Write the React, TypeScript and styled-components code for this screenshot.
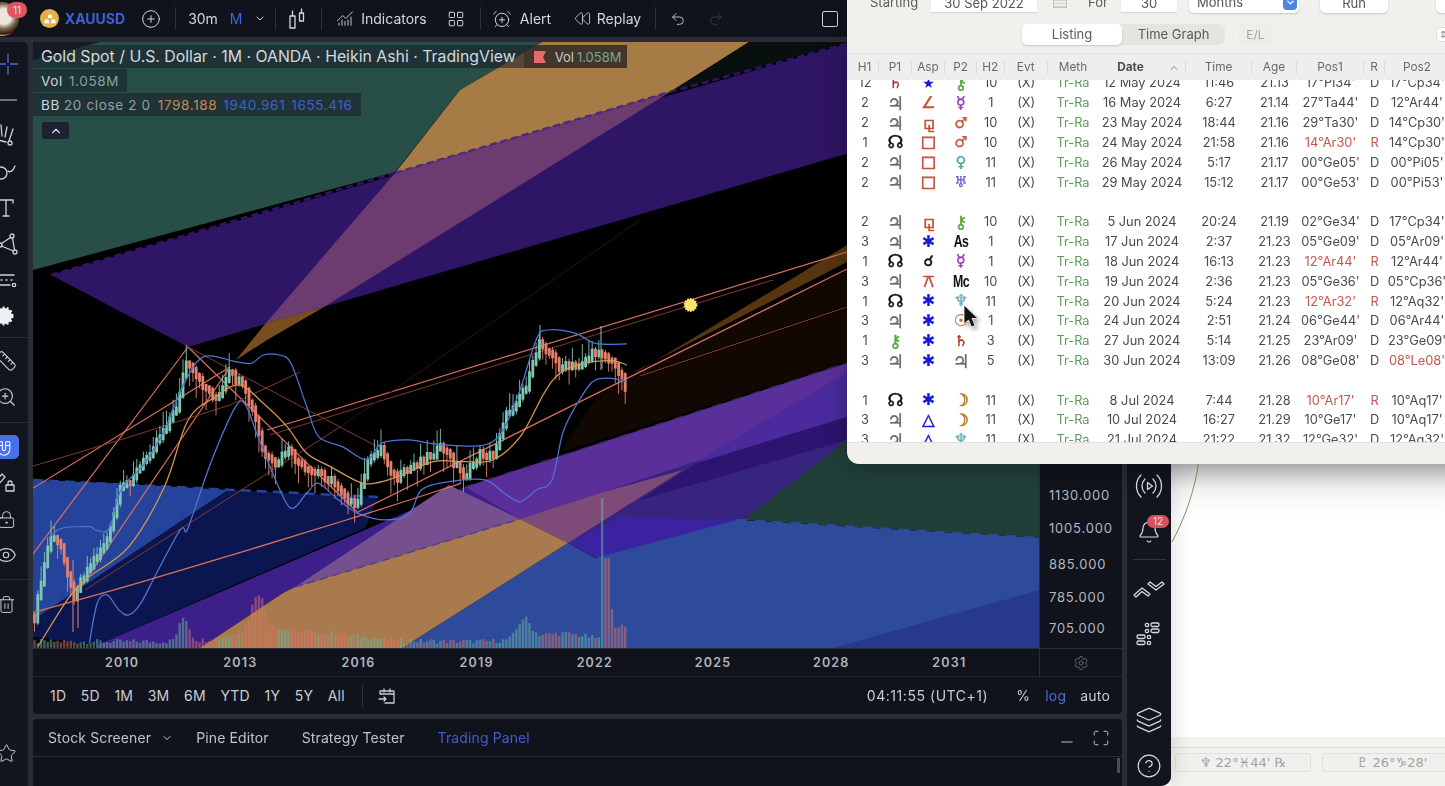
import React from "react";
import styled, { createGlobalStyle } from "styled-components";
import {
  AlarmClockPlus, Bell, ChartNoAxesCombined, ChevronDown, ChevronUp, CircleHelp, CirclePlus, Eye, Layers,
  LayoutGrid, LockKeyhole, Magnet, Maximize, Minus, Redo2, Rewind, Ruler, Settings, Square, Star, Trash2,
  Undo2, ZoomIn,
} from "lucide-react";

const Global = createGlobalStyle`
  html, body { margin: 0; padding: 0; width: 100%; height: 100%; overflow: hidden; background: #fff; }
  #root { width: 1445px; height: 786px; overflow: hidden; }
  * { box-sizing: border-box; }
`;

const Screen = styled.div`
  position: relative;
  display: flex;
  width: 1445px;
  height: 786px;
  overflow: hidden;
  font-family: Inter, "Liberation Sans", sans-serif;
  filter: blur(0.35px);
`;

/* ---------- trading window ---------- */
const TradingWindow = styled.div`
  flex: 0 0 1171px;
  display: flex;
  flex-direction: column;
  height: 786px;
  background: #292c36;
  border-bottom-right-radius: 10px;
  box-shadow: 0 0 22px rgba(0, 0, 0, 0.16);
  z-index: 1;
  color: #d1d4dc;
`;
const TopBar = styled.header`
  flex: 0 0 37px;
  display: flex;
  align-items: center;
  background: #11131c;
  overflow: hidden;
  font-size: 14px;
  color: #d5d7de;
`;
const Slot = styled.div<{ $ml?: number; $w?: number; $color?: string; $bold?: boolean }>`
  flex: 0 0 ${(p) => (p.$w ? `${p.$w}px` : "auto")};
  margin-left: ${(p) => p.$ml ?? 0}px;
  display: flex;
  align-items: center;
  justify-content: center;
  white-space: nowrap;
  overflow: hidden;
  color: ${(p) => p.$color ?? "inherit"};
  font-weight: ${(p) => (p.$bold ? 700 : 400)};
`;
const BarDivider = styled.div<{ $ml: number }>`
  flex: 0 0 1px;
  height: 23px;
  margin-left: ${(p) => p.$ml}px;
  background: #2e313c;
`;
const AvatarWrap = styled.div`
  flex: 0 0 34px;
  height: 34px;
  margin-left: -15px;
  position: relative;
  border-radius: 50%;
  background: radial-gradient(circle at 55% 42%, #ece7da 0 28%, #7c6a50 46%, #2a1c0e 66%, #d0913a 70%, #c98a34 78%, #1a1208 84%);
`;
const NoticeBadge = styled.span`
  position: absolute;
  right: -8px;
  top: 0;
  width: 20px;
  height: 16px;
  border-radius: 9px;
  background: #e25560;
  color: #f7e8e8;
  font-size: 10px;
  line-height: 16px;
  text-align: center;
`;
const CoinLogo = styled.div`
  flex: 0 0 19px;
  height: 19px;
  margin-left: 21px;
  border-radius: 50%;
  background: #e3b04b;
  display: flex;
  align-items: center;
  justify-content: center;
`;

const MainRow = styled.div`
  flex: 1;
  display: flex;
  min-height: 0;
  padding-top: 5px;
`;
const LeftRail = styled.nav`
  flex: 0 0 28px;
  margin-right: 5px;
  display: flex;
  flex-direction: column;
  padding-top: 4px;
  padding-bottom: 15px;
  background: #12141e;
  border-top-right-radius: 5px;
  overflow: hidden;
  color: #cfd2da;
`;
const RailCell = styled.div<{ $blue?: boolean }>`
  flex: 0 0 36px;
  margin-left: -8px;
  width: 28px;
  display: flex;
  align-items: center;
  justify-content: center;
  color: ${(p) => (p.$blue ? "#4c6fe0" : "inherit")};
  position: relative;
`;
const MagnetBg = styled.div`
  flex: 0 0 30px;
  height: 24px;
  margin-left: -4px;
  background: #4b6fe8;
  border-radius: 5px;
  display: flex;
  align-items: center;
  justify-content: center;
  color: #fff;
`;
const TurnedMagnet = styled(Magnet)`
  transform: rotate(135deg);
`;
const RailSep = styled.div<{ $mt: number; $mb: number }>`
  flex: 0 0 1px;
  margin-top: ${(p) => p.$mt}px;
  margin-bottom: ${(p) => p.$mb}px;
  background: #2b2e39;
`;
const RailBottom = styled(RailCell)`
  margin-top: auto;
`;

const ChartColumn = styled.main`
  flex: 0 0 1089px;
  display: flex;
  flex-direction: column;
  min-width: 0;
`;
const ChartRow = styled.div`
  flex: 0 0 606px;
  display: flex;
  position: relative;
  background: #11131c;
`;
const ChartPane = styled.div`
  flex: 0 0 1006px;
  position: relative;
  height: 606px;
  overflow: hidden;
  background: #000;
`;
const PriceAxis = styled.div`
  flex: 1;
  display: flex;
  flex-direction: column;
  justify-content: flex-end;
  align-items: flex-start;
  padding: 0 0 13px 9px;
  border-left: 1px solid #2a2d38;
  font-size: 13px;
  letter-spacing: 0.8px;
  color: #b4b7c0;
`;
const PriceLabel = styled.div<{ $mb: number }>`
  line-height: 14px;
  margin-bottom: ${(p) => p.$mb}px;
`;
const TimeRow = styled.div`
  flex: 0 0 28px;
  display: flex;
  background: #11131c;
  border-top: 1px solid #2a2d38;
`;
const TimeAxis = styled.div`
  flex: 0 0 1006px;
  display: flex;
  align-items: center;
  padding-left: 30px;
`;
const TimeLabel = styled.div`
  flex: 0 0 118.2px;
  text-align: center;
  font-size: 12.5px;
  font-weight: 600;
  letter-spacing: 1.2px;
  color: #b2b5be;
`;
const GearCell = styled.div`
  flex: 1;
  display: flex;
  align-items: center;
  justify-content: center;
  border-left: 1px solid #2a2d38;
  color: #6f7380;
`;
const RangeBar = styled.div`
  flex: 0 0 38px;
  display: flex;
  align-items: center;
  gap: 14.6px;
  padding: 0 12px 0 17px;
  background: #11131c;
  border-top: 1px solid #24262f;
  border-bottom-left-radius: 4px;
  border-bottom-right-radius: 4px;
  font-size: 14px;
  letter-spacing: 0.2px;
  color: #c9ccd4;
`;
const RangeDivider = styled.div`
  width: 1px;
  height: 22px;
  margin-left: 3px;
  background: #2e313c;
`;
const RangeRight = styled.div`
  margin-left: auto;
  display: flex;
  align-items: center;
`;
const RangeText = styled.span<{ $ml?: number; $blue?: boolean; $wide?: boolean }>`
  margin-left: ${(p) => p.$ml ?? 0}px;
  letter-spacing: ${(p) => (p.$wide ? "0.55px" : "0.2px")};
  color: ${(p) => (p.$blue ? "#4b6bd6" : "#c9ccd4")};
`;
const TabBar = styled.div`
  flex: 0 0 37px;
  margin-top: 5px;
  display: flex;
  align-items: center;
  padding: 0 12px 0 15px;
  background: #11131c;
  border-top-left-radius: 4px;
  border-top-right-radius: 4px;
  font-size: 14px;
  letter-spacing: 0.12px;
  color: #bfc2ca;
`;
const Tab = styled.span<{ $ml?: number; $active?: boolean }>`
  margin-left: ${(p) => p.$ml ?? 0}px;
  display: flex;
  color: ${(p) => (p.$active ? "#3f5fc8" : "inherit")};
`;
const TabTools = styled.div`
  margin-left: auto;
  display: flex;
  align-items: center;
  gap: 16px;
`;
const PanelFoot = styled.div`
  flex: 1;
  margin-top: 1px;
  background: #11131c;
  position: relative;
`;
const ScrollNub = styled.div`
  position: absolute;
  right: 2px;
  top: 1px;
  width: 3px;
  height: 15px;
  background: #4a4d58;
`;
const RightRail = styled.aside`
  flex: 0 0 44px;
  margin-left: 5px;
  display: flex;
  flex-direction: column;
  align-items: center;
  padding-top: 424px;
  background: #12141e;
  border-bottom-right-radius: 10px;
  color: #d6d9e0;
`;
const RailButton = styled.div<{ $mt?: number; $auto?: boolean }>`
  flex: 0 0 40px;
  width: 40px;
  margin-top: ${(p) => (p.$auto ? "auto" : `${p.$mt ?? 0}px`)};
  display: flex;
  align-items: center;
  justify-content: center;
  position: relative;
`;
const BellBadge = styled.span`
  position: absolute;
  top: 3px;
  right: 0;
  width: 22px;
  height: 13px;
  border-radius: 7px;
  background: #d9525b;
  color: #f4e9e9;
  font-size: 10px;
  line-height: 13px;
  text-align: center;
`;
const RightSep = styled.div`
  flex: 0 0 1px;
  width: 33px;
  margin-top: 7px;
  background: #33363f;
`;

/* ---------- chart legend (over the chart) ---------- */
const Legend = styled.div`
  position: absolute;
  left: 0;
  top: 3px;
  display: flex;
  flex-direction: column;
  align-items: flex-start;
  gap: 1px;
`;
const LegendLine = styled.div`
  display: flex;
  align-items: center;
  height: 23px;
  padding: 0 8px;
  background: rgba(24, 30, 42, 0.55);
  white-space: nowrap;
`;
const TitleText = styled.span`
  font-size: 15.84px;
  color: #d6d8de;
`;
const FlagChip = styled.div`
  display: flex;
  align-items: center;
  align-self: stretch;
  gap: 8px;
  margin-left: 8px;
  padding-left: 9px;
  padding-right: 6px;
  margin-right: -8px;
  background: rgba(50, 40, 36, 0.55);
  font-size: 13px;
`;
const LegendRows = styled.div`
  font-size: 13.5px;
  letter-spacing: 0.65px;
`;
const Leg = styled.span<{ $c: string; $ml?: number }>`
  color: ${(p) => p.$c};
  margin-left: ${(p) => p.$ml ?? 0}px;
`;
const CollapseBtn = styled.div`
  width: 27px;
  height: 17px;
  margin: 5px 0 0 9px;
  background: #1e2230;
  border-radius: 2px;
  display: flex;
  align-items: center;
  justify-content: center;
  color: #d5d7de;
`;

/* ---------- window behind, right ---------- */
const BackWindow = styled.section`
  flex: 1;
  display: flex;
  flex-direction: column;
  justify-content: flex-end;
  position: relative;
  background: linear-gradient(to bottom, #cfcfcf 0, #cfcfcf 464px, #f3f3f3 490px, #fff 515px);
`;
const ArcDrawing = styled.svg`
  position: absolute;
  left: 0;
  top: 460px;
`;
const BackFooter = styled.div`
  flex: 0 0 49px;
  display: flex;
  flex-direction: column;
  background: #f3f2ef;
`;
const BackRule = styled.div`
  flex: 0 0 11px;
  border-bottom: 1px solid #dcdbd8;
`;
const BackButtons = styled.div`
  display: flex;
  gap: 11px;
  padding: 5px 0 0 4px;
`;
const BackButton = styled.div<{ $w: number }>`
  flex: 0 0 ${(p) => p.$w}px;
  height: 19px;
  display: flex;
  align-items: center;
  justify-content: center;
  background: #f1f0ee;
  border: 1px solid #e0dfdc;
  border-radius: 3px;
  font-family: "DejaVu Sans", sans-serif;
  font-size: 13px;
  color: #a3a3a3;
  white-space: nowrap;
`;

/* ---------- astrology window ---------- */
const AstroWindow = styled.section`
  position: absolute;
  left: 847px;
  top: -9px;
  width: 620px;
  height: 473px;
  display: flex;
  flex-direction: column;
  background: #f2f0ed;
  border-bottom-left-radius: 12px;
  box-shadow: 0 4px 26px rgba(0, 0, 0, 0.28);
  z-index: 2;
  font-size: 13px;
  color: #444;
  overflow: hidden;
`;
const FormRow = styled.div`
  flex: 0 0 22px;
  display: flex;
  align-items: center;
  padding-left: 23px;
`;
const FormLabel = styled.span<{ $ml?: number; $w: number }>`
  flex: 0 0 ${(p) => p.$w}px;
  margin-left: ${(p) => p.$ml ?? 0}px;
  color: #5c5c5c;
`;
const FormField = styled.div<{ $w: number }>`
  flex: 0 0 ${(p) => p.$w}px;
  height: 20px;
  background: #fff;
  box-shadow: 0 1px 1px rgba(0, 0, 0, 0.1);
  text-align: center;
  line-height: 22px;
  color: #555;
`;
const FormSelect = styled.div`
  flex: 0 0 110px;
  margin-left: 12px;
  height: 21px;
  display: flex;
  align-items: center;
  justify-content: space-between;
  padding: 0 2px 0 8px;
  background: #fff;
  border-radius: 5px;
  box-shadow: 0 1px 2px rgba(0, 0, 0, 0.18);
  color: #555;
`;
const Stepper = styled.div`
  width: 14px;
  height: 16px;
  border-radius: 4px;
  background: #4d84e6;
  color: #fff;
  display: flex;
  align-items: center;
  justify-content: center;
`;
const FormButton = styled.div<{ $ml: number; $w: number }>`
  flex: 0 0 ${(p) => p.$w}px;
  margin-left: ${(p) => p.$ml}px;
  height: 21px;
  background: #fff;
  border-radius: 5px;
  box-shadow: 0 1px 2px rgba(0, 0, 0, 0.18);
  text-align: center;
  line-height: 22px;
  color: #555;
`;
const CalGlyph = styled.div`
  flex: 0 0 14px;
  margin-left: 16px;
  margin-right: 21px;
  height: 11px;
  border: 1px solid #c4c3c0;
  background: repeating-linear-gradient(0deg, #d5d4d1 0 1px, #efeeeb 1px 3px);
`;
const TabsRow = styled.div`
  flex: 0 0 21px;
  margin-top: 11px;
  display: flex;
  align-items: center;
  padding-left: 175px;
`;
const Segments = styled.div`
  flex: 0 0 203px;
  display: flex;
  height: 21px;
  background: #e6e4e1;
  border-radius: 6px;
`;
const Segment = styled.div<{ $on?: boolean }>`
  flex: ${(p) => (p.$on ? "0 0 100px" : "1")};
  background: ${(p) => (p.$on ? "#fff" : "transparent")};
  border-radius: 5px;
  box-shadow: ${(p) => (p.$on ? "0 1px 2px rgba(0,0,0,.18)" : "none")};
  text-align: center;
  line-height: 21px;
  color: #5a5a5a;
`;
const GhostBtn = styled.div`
  flex: 0 0 35px;
  margin-left: 13px;
  height: 21px;
  background: #efedea;
  border-radius: 4px;
  text-align: center;
  line-height: 21px;
  font-size: 12px;
  color: #a7a6a3;
`;
const SideStub = styled.div`
  flex: 0 0 30px;
  margin-left: 163px;
  height: 15px;
  background: #fff;
  border-radius: 4px;
  border: 1px solid #dedcd9;
  font-size: 10px;
  line-height: 13px;
  padding-left: 2px;
  color: #888;
`;

const COLS = "32px 33px 33px 32px 27.5px 43.5px 50px 88px 66px 45px 67px 21px 64px";
const TableHead = styled.div`
  flex: 0 0 27px;
  margin-top: 8px;
  display: grid;
  grid-template-columns: ${COLS};
  align-items: center;
  background: #eeeeee;
  border-top: 1px solid #e2e1df;
  font-size: 11.8px;
  color: #6a6a6a;
  & > :first-child { padding-left: 4px; }
`;
const HeadCell = styled.div<{ $sep?: boolean; $strong?: boolean }>`
  position: relative;
  height: 13px;
  display: flex;
  align-items: center;
  justify-content: center;
  padding-right: ${(p) => (p.$strong ? 22 : 0)}px;
  border-right: ${(p) => (p.$sep ? "1px solid #dcdcdc" : "none")};
  font-weight: ${(p) => (p.$strong ? 700 : 400)};
  color: ${(p) => (p.$strong ? "#4c4c4c" : "inherit")};
`;
const SortCaret = styled.span`
  position: absolute;
  right: 5px;
  top: 1px;
  color: #888;
  display: flex;
`;
const TableBody = styled.div`
  flex: 0 0 363px;
  background: #fff;
  overflow: hidden;
  border-bottom: 1px solid #e2e0dd;
`;
const Rows = styled.div`
  margin-top: -7px;
  display: flex;
  flex-direction: column;
`;
const Row = styled.div`
  flex: 0 0 19.84px;
  height: 19.84px;
  display: grid;
  grid-template-columns: ${COLS};
  align-items: center;
  text-align: center;
  white-space: nowrap;
  font-size: 12.8px;
  color: #4a4a4a;
  & > :first-child { padding-left: 4px; }
`;
const Meth = styled.span`
  color: #609c5c;
`;
const Hot = styled.span<{ $hot?: boolean }>`
  color: ${(p) => (p.$hot ? "#c7564d" : "#4a4a4a")};
`;
const Glyph = styled.span<{ $c: string; $s: number; $w: number }>`
  font-family: "DejaVu Sans", sans-serif;
  font-size: ${(p) => p.$s}px;
  line-height: 16px;
  height: 16px;
  color: ${(p) => p.$c};
  -webkit-text-stroke: ${(p) => p.$w}px ${(p) => p.$c};
`;
const AngleTag = styled.span`
  display: inline-block;
  font-family: "Liberation Sans", sans-serif;
  font-size: 13px;
  font-weight: 700;
  letter-spacing: -0.6px;
  color: #111;
  transform: scale(0.95, 1.3);
`;
const CursorArt = styled.svg`
  position: absolute;
  left: 962px;
  top: 304px;
  z-index: 3;
  filter: drop-shadow(2px 3px 2px rgba(0, 0, 0, 0.35));
`;

/* ---------- chart data ---------- */
const WAY: [number, number][] = [
  [34, 620], [50, 537], [62, 547], [73, 597], [81, 580], [109, 537], [119, 493], [141, 467], [157, 440], [176, 410],
  [186, 363], [198, 380], [218, 400], [230, 373], [243, 387], [255, 417], [263, 453], [275, 467], [287, 450],
  [307, 473], [321, 473], [342, 490], [356, 510], [366, 467], [380, 447], [396, 480], [421, 460], [443, 448],
  [465, 477], [481, 453], [493, 457], [504, 420], [528, 383], [540, 340], [560, 367], [576, 367], [599, 350],
  [619, 370], [627, 390],
];
const yAt = (x: number) => {
  for (let i = 1; i < WAY.length; i++) {
    if (x <= WAY[i][0]) {
      const [x0, y0] = WAY[i - 1];
      const [x1, y1] = WAY[i];
      return y0 + ((y1 - y0) * (x - x0)) / (x1 - x0);
    }
  }
  return WAY[WAY.length - 1][1];
};
const rnd = (i: number) => {
  const s = Math.sin(i * 12.9898) * 43758.5453;
  return s - Math.floor(s);
};
type Candle = { x: number; top: number; bot: number; hi: number; lo: number; up: boolean };
const CANDLES: Candle[] = [];
for (let i = 0, x = 34.5; x <= 628; x += 3.3, i++) {
  const a = yAt(Math.max(34, x - 3.3)) + (rnd(i) - 0.5) * 7;
  const b = yAt(x) + (rnd(i + 1) - 0.5) * 7;
  const up = b < a;
  const top = Math.min(a, b) - 3;
  const bot = Math.max(a, b) + 3;
  CANDLES.push({
    x,
    top,
    bot,
    up,
    hi: top - (up ? rnd(i + 50) * 15 + 2 : rnd(i + 50) * 3),
    lo: bot + (up ? rnd(i + 70) * 3 : rnd(i + 70) * 17 + 2),
  });
}
const bump = (x: number, c: number, w: number, h: number) => h * Math.exp(-((x - c) * (x - c)) / (w * w));
const VOLS = CANDLES.map((c, i) => {
  const x = c.x;
  const h =
    4 + rnd(i + 11) * 5 +
    bump(x, 258, 9, 36) + bump(x, 184, 7, 24) + bump(x, 524, 9, 20) + bump(x, 560, 40, 8) +
    bump(x, 610, 4, 36) + bump(x, 622, 6, 18) + bump(x, 260, 40, 10) + bump(x, 320, 60, 8);
  const peak = x > 599 && x < 605;
  return { x, h: peak ? 150 : x >= 605 && x < 609 ? 90 : h, up: peak ? true : c.up };
});

const UPPER = "50,650 80,625 150,620 165,630 200,625 230,510 290,430 340,330 390,190 440,110 520,125 560,130 590,105 630,105 660,130 700,260 730,350 790,380 850,420 880,380 900,365 960,360 1050,375 1170,365 1230,240 1280,60 1310,30 1380,40 1430,70 1510,72";
const LOWER = "150,970 170,850 195,825 225,870 250,885 280,850 320,760 380,630 395,635 410,590 460,420 520,260 545,255 570,330 600,420 640,530 665,565 700,520 730,490 780,540 830,580 900,600 960,580 990,510 1060,485 1150,480 1200,520 1240,545 1280,510 1320,480 1350,330 1400,220 1430,180 1470,175 1510,185";
const BASIS = "20,980 100,830 150,770 250,680 340,500 400,300 470,230 530,195 590,250 650,320 700,400 760,440 830,485 870,490 930,470 1020,425 1100,425 1170,420 1240,350 1300,220 1340,160 1400,130 1470,122 1510,135";
const CURVE = "0,880 300,780 800,600 1090,490";

const smooth = (s: string) => {
  const p = s.split(" ").map((t) => t.split(",").map(Number));
  let d = `M${p[0][0]} ${p[0][1]}`;
  for (let i = 0; i < p.length - 1; i++) {
    const a = p[Math.max(0, i - 1)];
    const b = p[i];
    const c = p[i + 1];
    const e = p[Math.min(p.length - 1, i + 2)];
    d += `C${b[0] + (c[0] - a[0]) / 6} ${b[1] + (c[1] - a[1]) / 6} ${c[0] - (e[0] - b[0]) / 6} ${c[1] - (e[1] - b[1]) / 6} ${c[0]} ${c[1]}`;
  }
  return d;
};

const POLYS: [string, string][] = [
  ["33,42 100,42 33,60", "#151b22"],
  ["100,42 542,42 460,90 395,172 33,270 33,60", "#284f47"],
  ["395,173 460,90 542,42 749,42 670,92", "#a67b45"],
  ["749,42 849,42 670,92", "#07100f"],
  ["51,275 849,43 849,153 279,320 188,347", "#2f1565"],
  ["395,173 670,92 324,307 266,323", "#6c3b6f"],
  ["324,307 266,323 236,360 267,340", "#7a4f1f"],
  ["600,392 847,269 847,363 560,452", "#120803"],
  ["640,370 790,280 847,245 847,262 632,373", "#573510"],
  ["33,480 109,483 228,490 33,620", "#25439a"],
  ["228,490 378,497 365,528 97,645 33,637 33,620", "#0b1650"],
  ["33,637 97,645 33,648", "#0a0a12"],
  ["520,519 847,373 847,470 743,520 595,558 568,543", "#37247e"],
  ["97,645 465,487 650,427 650,480 520,519 295,587 283,593 200,648 97,648", "#3c1f88"],
  ["465,487 650,427 847,363 847,373 700,460 600,493 520,519", "#5b2f9a"],
  ["700,460 847,373 847,417 697,463", "#4a2a9c"],
  ["449,485 520,519 295,587", "#764f8e"],
  ["640,500 697,463 847,417 847,440", "#2d1470"],
  ["568,543 620,517 743,520 600,558", "#3b22a0"],
  ["743,520 847,440 1039,440 1039,538", "#203f38"],
  ["402,648 568,543 595,558 737,520 1039,538 1039,648", "#2e4b9b"],
  ["520,519 600,493 683,470 568,543", "#7e4a78"],
  ["520,519 568,543 402,648 200,648 283,593 295,587", "#a87a4d"],
  ["833,648 1039,590 1039,648", "#27388f"],
];

const Chart = () => (
  <svg width={1006} height={606} viewBox="33 42 1006 606" style={{ display: "block" }}>
    <rect x={33} y={42} width={1006} height={606} fill="#000" />
    {POLYS.map(([pts, c], i) => (
      <polygon key={i} points={pts} fill={c} />
    ))}
    <line x1={51} y1={275} x2={395} y2={173} stroke="#2f1565" strokeWidth={2.5} strokeDasharray="7 4" />
    <line x1={395} y1={173} x2={670} y2={92} stroke="#4c2a85" strokeWidth={2.5} strokeDasharray="7 4" />
    <line x1={670} y1={92} x2={849} y2={43} stroke="#2f1565" strokeWidth={2.5} strokeDasharray="7 4" />
    <line x1={737} y1={520} x2={1039} y2={538} stroke="#2e4b9b" strokeWidth={2.5} strokeDasharray="10 8" />
    <line x1={33} y1={480} x2={378} y2={497} stroke="#25439a" strokeWidth={2.5} strokeDasharray="10 6" />
    <line x1={295} y1={587} x2={520} y2={519} stroke="#5a3b95" strokeWidth={1.5} strokeDasharray="8 5" />
    <line x1={465} y1={487} x2={847} y2={363} stroke="#3b2a5c" strokeWidth={1.5} strokeDasharray="10 10" />
    <g stroke="#dd705c" fill="none" strokeWidth={1.2}>
      <line x1={30} y1={558} x2={188} y2={347} />
      <line x1={188} y1={347} x2={358} y2={513} />
      <line x1={30} y1={490} x2={230} y2={367} />
      <line x1={358} y1={512} x2={847} y2={269} />
      <line x1={267} y1={430} x2={847} y2={252} />
      <line x1={81} y1={587} x2={230} y2={367} />
    </g>
    <g stroke="#7e3a30" fill="none" strokeWidth={1}>
      <line x1={188} y1={347} x2={378} y2={447} />
      <polyline points="30,467 120,440 230,405 300,372" />
      <line x1={270} y1={435} x2={773} y2={280} />
      <line x1={640} y1={376} x2={847} y2={307} />
      <line x1={85} y1={590} x2={340} y2={427} />
      <line x1={340} y1={427} x2={640} y2={220} stroke="#2a1410" />
    </g>
    {VOLS.map((v, i) => (
      <rect key={i} x={v.x - 1.2} y={648 - v.h} width={2.4} height={v.h} fill={v.up ? "#69b8a2" : "#dd7565"} opacity={0.5} />
    ))}
    {CANDLES.map((c, i) => (
      <g key={i} fill={c.up ? "#7fc7b0" : "#e6806d"} stroke={c.up ? "#7fc7b0" : "#e6806d"}>
        <line x1={c.x} x2={c.x} y1={c.hi} y2={c.lo} strokeWidth={0.9} />
        <rect x={c.x - 1.4} y={c.top} width={2.8} height={c.bot - c.top} stroke="none" />
      </g>
    ))}
    <line x1={73} x2={73} y1={560} y2={632} stroke="#e6806d" strokeWidth={1} />
    <line x1={78} x2={78} y1={585} y2={628} stroke="#e6806d" strokeWidth={1} />
    <line x1={540} x2={540} y1={325} y2={360} stroke="#7fc7b0" strokeWidth={1} />
    <line x1={601} x2={601} y1={326} y2={370} stroke="#7fc7b0" strokeWidth={1} />
    <g transform="translate(30 320) scale(0.3954 0.3333)" fill="none" strokeWidth={1.25}>
      <path d={smooth(UPPER)} stroke="#4f74d6" vectorEffect="non-scaling-stroke" />
      <path d={smooth(LOWER)} stroke="#4f74d6" vectorEffect="non-scaling-stroke" />
      <path d={smooth(BASIS)} stroke="#d9974f" vectorEffect="non-scaling-stroke" />
      <path d={smooth(CURVE)} stroke="#dd705c" vectorEffect="non-scaling-stroke" />
    </g>
    <circle cx={690.5} cy={305} r={6} fill="#fbe56c" stroke="#fbe56c" strokeWidth={2} strokeDasharray="1.5 1.2" />
  </svg>
);

/* ---------- small icons ---------- */
const S = { fill: "none", stroke: "currentColor", strokeWidth: 1.3, strokeLinecap: "round", strokeLinejoin: "round" } as const;
const GoldBars = () => (
  <svg width={12} height={10} viewBox="0 0 12 10" fill="#fff">
    <path d="M4.5 0.5h3l.8 3.6H3.700zM1 5.600h3.400l.7 3.600H.2zM7.600 5.600H11l.8 3.600H6.900z" />
  </svg>
);
const CandleIcon = () => (
  <svg width={20} height={22} viewBox="0 0 20 22" {...S}>
    <rect x={3} y={8} width={5} height={12} />
    <path d="M5.500 3v5M14.500 1v4" />
    <rect x={12.500} y={5} width={4} height={8} />
  </svg>
);
const Crosshair = () => (
  <svg width={24} height={26} viewBox="0 0 24 26" fill="none" stroke="currentColor" strokeWidth={1.3}>
    <path d="M14 3v9M14 15v9M4 13h8M16 13h8" />
  </svg>
);
const LineTool = () => (
  <svg width={24} height={20} viewBox="0 0 24 20" fill="none" stroke="currentColor" strokeWidth={1.2}>
    <path d="M0 10h23" />
  </svg>
);
const ForkTool = () => (
  <svg width={24} height={24} viewBox="0 0 24 24" {...S}>
    <path d="M2 3v10M7 1l1 11M13 3l-2 10M19 5l-4 12M0 15l12 3" />
    <circle cx={16} cy={19} r={2} />
  </svg>
);
const CurveTool = () => (
  <svg width={26} height={22} viewBox="0 0 26 22" {...S}>
    <circle cx={8} cy={12} r={6} />
    <path d="M15 10c2 2 5 0 7-5" />
  </svg>
);
const TextTool = () => (
  <svg width={20} height={20} viewBox="0 0 20 20" {...S}>
    <path d="M3 5V2h14v3M10 2v16M7 18h6" />
  </svg>
);
const NetTool = () => (
  <svg width={24} height={24} viewBox="0 0 24 24" {...S}>
    <circle cx={18} cy={4} r={2} />
    <circle cx={21} cy={20} r={2} />
    <circle cx={6} cy={13} r={2} />
    <path d="M16.500 5.500L7.500 11.500M18.500 6l2 12M19.500 19l-12-5" />
  </svg>
);
const LinesTool = () => (
  <svg width={24} height={22} viewBox="0 0 24 22" {...S}>
    <path d="M0 6h20M0 16h16" />
    <circle cx={20} cy={16} r={1.700} />
    <path d="M2 11h1M7 11h1M12 11h1M17 11h1" />
  </svg>
);
const SplatTool = () => (
  <svg width={24} height={22} viewBox="0 0 24 22">
    <circle cx={10} cy={11} r={8} fill="#eef0f4" stroke="#eef0f4" strokeWidth={3} strokeDasharray="2 2" />
  </svg>
);
const LockPen = () => (
  <svg width={24} height={22} viewBox="0 0 24 22" {...S}>
    <path d="M0 11L8 2l3 3-8 9" />
    <rect x={12} y={13} width={8} height={6} />
    <path d="M14 13v-2a2 2 0 0 1 4 0v2" />
  </svg>
);
const RangeCal = () => (
  <svg width={18} height={18} viewBox="0 0 18 18" {...S}>
    <path d="M2 7V4h14v12H7M2 7h14M6 2v3M12 2v3M1 12h7M6 10l2 2-2 2" />
  </svg>
);
const ReplayArcs = () => (
  <svg width={32} height={28} viewBox="0 0 32 28" {...S}>
    <path d="M8 3C2 9 2 19 8 25M24 3c6 6 6 16 0 22M12 7c-4 4-4 10 0 14M20 7c4 4 4 10 0 14" />
    <path d="M14.500 10.500v7l5-3.500z" />
  </svg>
);
const ZigIcon = () => (
  <svg width={32} height={22} viewBox="0 0 32 22" {...S}>
    <path d="M1 16L9 9l8 6-2 2-6-4.500L3 18zM15 5l8 6 8-6-2-2-6 4.500L17 3z" />
  </svg>
);
const DotsIcon = () => (
  <svg width={26} height={26} viewBox="0 0 26 26" {...S}>
    <circle cx={11} cy={4} r={1.700} />
    <circle cx={11} cy={10} r={1.700} />
    <rect x={15} y={2} width={8} height={3.500} rx={1.500} />
    <rect x={15} y={8} width={8} height={3.500} rx={1.500} />
    <circle cx={13} cy={16} r={1.700} />
    <circle cx={13} cy={22} r={1.700} />
    <rect x={1} y={14} width={8} height={3.500} rx={1.500} />
    <rect x={1} y={20} width={8} height={3.500} rx={1.500} />
  </svg>
);

/* ---------- table ---------- */
const RED = "#c4503c";
const BLUE = "#1818d8";
type GlyphDef = [string, string, number, number];
const JUP: GlyphDef = ["♃", "#6a6a6a", 19, 0.3];
const NODE: GlyphDef = ["☊", "#111", 18, 0.5];
const SEXT: GlyphDef = ["✱", BLUE, 16, 0.1];
const SQ: GlyphDef = ["□", RED, 16, 0.7];
const SESQ: GlyphDef = ["⚼", RED, 18, 0.6];
const MARS: GlyphDef = ["♂", RED, 15, 0.3];
const CHI: GlyphDef = ["⚷", "#5aa842", 17, 0.5];
const MERC: GlyphDef = ["☿", "#9a38c0", 16, 0.5];
const NEP: GlyphDef = ["♆", "#67b0b8", 16, 0.3];
const MOON: GlyphDef = ["☽", "#c08030", 17, 0.7];
const TRI: GlyphDef = ["△", BLUE, 16, 0.6];
const SAT: GlyphDef = ["♄", "#a33020", 15, 0.3];

const A = (h1: string, p1: GlyphDef, asp: GlyphDef, p2: GlyphDef | string, h2: string, date: string, time: string, age: string, pos1: string, pos2: string, hot: boolean, hot2?: boolean) =>
  ({ h1, p1, asp, p2, h2, date, time, age, pos1, pos2, hot, hot2 });
const ROWS = [
  A("12", SAT, ["★", BLUE, 14, 0], CHI, "10", "12 May 2024", "11:46", "21.13", "17°Pi34'", "17°Cp34'", false),
  A("2", JUP, ["∠", RED, 16, 0.5], MERC, "1", "16 May 2024", "6:27", "21.14", "27°Ta44'", "12°Ar44'", false),
  A("2", JUP, SESQ, MARS, "10", "23 May 2024", "18:44", "21.16", "29°Ta30'", "14°Cp30'", false),
  A("1", NODE, SQ, MARS, "10", "24 May 2024", "21:58", "21.16", "14°Ar30'", "14°Cp30'", true),
  A("2", JUP, SQ, ["♀", "#4aa3a0", 15, 0.3], "11", "26 May 2024", "5:17", "21.17", "00°Ge05'", "00°Pi05'", false),
  A("2", JUP, SQ, ["♅", "#6a5ad0", 15, 0.3], "11", "29 May 2024", "15:12", "21.17", "00°Ge53'", "00°Pi53'", false),
  null,
  A("2", JUP, SESQ, CHI, "10", "5 Jun 2024", "20:24", "21.19", "02°Ge34'", "17°Cp34'", false),
  A("3", JUP, SEXT, "As", "1", "17 Jun 2024", "2:37", "21.23", "05°Ge09'", "05°Ar09'", false),
  A("1", NODE, ["☌", "#111", 15, 0.6], MERC, "1", "18 Jun 2024", "16:13", "21.23", "12°Ar44'", "12°Ar44'", true),
  A("3", JUP, ["⚻", RED, 17, 0.7], "Mc", "10", "19 Jun 2024", "2:36", "21.23", "05°Ge36'", "05°Cp36'", false),
  A("1", NODE, SEXT, NEP, "11", "20 Jun 2024", "5:24", "21.23", "12°Ar32'", "12°Aq32'", true),
  A("3", JUP, SEXT, ["☉", "#b87a3c", 16, 0.4], "1", "24 Jun 2024", "2:51", "21.24", "06°Ge44'", "06°Ar44'", false),
  A("1", CHI, SEXT, SAT, "3", "27 Jun 2024", "5:14", "21.25", "23°Ar09'", "23°Ge09'", false),
  A("3", JUP, SEXT, JUP, "5", "30 Jun 2024", "13:09", "21.26", "08°Ge08'", "08°Le08'", false, true),
  null,
  A("1", NODE, SEXT, MOON, "11", "8 Jul 2024", "7:44", "21.28", "10°Ar17'", "10°Aq17'", true),
  A("3", JUP, TRI, MOON, "11", "10 Jul 2024", "16:27", "21.29", "10°Ge17'", "10°Aq17'", false),
  A("3", JUP, TRI, NEP, "11", "21 Jul 2024", "21:22", "21.32", "12°Ge32'", "12°Aq32'", false),
];
const HEADS: [string, boolean, boolean?][] = [
  ["H1", true], ["P1", true], ["Asp", true], ["P2", true], ["H2", true], ["Evt", true], ["Meth", false], ["Date", true, true],
  ["Time", true], ["Age", true], ["Pos1", true], ["R", true], ["Pos2", false],
];
const G = ({ d }: { d: GlyphDef | string }) =>
  typeof d === "string" ? <AngleTag>{d}</AngleTag> : <Glyph $c={d[1]} $s={d[2]} $w={d[3]}>{d[0]}</Glyph>;

export default function App() {
  return (
    <Screen>
      <Global />
      <TradingWindow>
        <TopBar>
          <AvatarWrap><NoticeBadge>11</NoticeBadge></AvatarWrap>
          <CoinLogo><GoldBars /></CoinLogo>
          <Slot $ml={6} $w={60} $color="#3f5fd6" $bold>XAUUSD</Slot>
          <Slot $ml={16} $w={20}><CirclePlus size={20} strokeWidth={1.2} /></Slot>
          <BarDivider $ml={14} />
          <Slot $ml={12} $w={30}>30m</Slot>
          <Slot $ml={12} $w={12} $color="#4565dc">M</Slot>
          <Slot $ml={12} $w={12}><ChevronDown size={13} /></Slot>
          <BarDivider $ml={9} />
          <Slot $ml={11} $w={20}><CandleIcon /></Slot>
          <BarDivider $ml={14} />
          <Slot $ml={14} $w={18}><ChartNoAxesCombined size={19} strokeWidth={1.2} /></Slot>
          <Slot $ml={6} $w={68}>Indicators</Slot>
          <Slot $ml={19} $w={18}><LayoutGrid size={18} strokeWidth={1.3} /></Slot>
          <BarDivider $ml={15} />
          <Slot $ml={11} $w={20}><AlarmClockPlus size={20} strokeWidth={1.2} /></Slot>
          <Slot $ml={7} $w={33}>Alert</Slot>
          <Slot $ml={21} $w={18}><Rewind size={17} strokeWidth={1.2} /></Slot>
          <Slot $ml={5} $w={46}>Replay</Slot>
          <BarDivider $ml={13} />
          <Slot $ml={13} $w={18}><Undo2 size={16} strokeWidth={1.3} /></Slot>
          <Slot $ml={20} $w={18} $color="#3b3e49"><Redo2 size={16} strokeWidth={1.3} /></Slot>
          <Slot $ml={95} $w={20}><Square size={20} strokeWidth={1.2} /></Slot>
        </TopBar>
        <MainRow>
          <LeftRail>
            <RailCell $blue><Crosshair /></RailCell>
            <RailCell><LineTool /></RailCell>
            <RailCell><ForkTool /></RailCell>
            <RailCell><CurveTool /></RailCell>
            <RailCell><TextTool /></RailCell>
            <RailCell><NetTool /></RailCell>
            <RailCell><LinesTool /></RailCell>
            <RailCell><SplatTool /></RailCell>
            <RailSep $mt={3} $mb={5} />
            <RailCell><Ruler size={22} strokeWidth={1.2} /></RailCell>
            <RailCell><ZoomIn size={22} strokeWidth={1.2} /></RailCell>
            <RailSep $mt={7} $mb={6} />
            <RailCell><MagnetBg><TurnedMagnet size={18} strokeWidth={1.4} /></MagnetBg></RailCell>
            <RailCell><LockPen /></RailCell>
            <RailCell><LockKeyhole size={19} strokeWidth={1.2} /></RailCell>
            <RailCell><Eye size={22} strokeWidth={1.2} /></RailCell>
            <RailSep $mt={6} $mb={6} />
            <RailCell><Trash2 size={19} strokeWidth={1.2} /></RailCell>
            <RailBottom><Star size={21} strokeWidth={1.1} /></RailBottom>
          </LeftRail>
          <ChartColumn>
            <ChartRow>
              <ChartPane>
                <Chart />
                <Legend>
                  <LegendLine>
                    <TitleText>Gold Spot / U.S. Dollar · 1M · OANDA · Heikin Ashi · TradingView</TitleText>
                    <FlagChip>
                      <svg width={14} height={14} viewBox="0 0 14 14"><path d="M1 1h12l-3 6 3 6H1z" fill="#e9686a" /></svg>
                      <Leg $c="#c9ccd4">Vol</Leg>
                      <Leg $c="#7ba394" $ml={-5}>1.058M</Leg>
                    </FlagChip>
                  </LegendLine>
                  <LegendLine>
                    <LegendRows><Leg $c="#d1d4dc">Vol</Leg><Leg $c="#7fa598" $ml={6}>1.058M</Leg></LegendRows>
                  </LegendLine>
                  <LegendLine>
                    <LegendRows>
                      <Leg $c="#d1d4dc">BB</Leg><Leg $c="#9a9da8" $ml={4}>20 close 2 0</Leg>
                      <Leg $c="#c98a4e" $ml={7}>1798.188</Leg><Leg $c="#3f62c8" $ml={6}>1940.961</Leg><Leg $c="#3f62c8" $ml={6}>1655.416</Leg>
                    </LegendRows>
                  </LegendLine>
                  <CollapseBtn><ChevronUp size={14} /></CollapseBtn>
                </Legend>
              </ChartPane>
              <PriceAxis>
                <PriceLabel $mb={19}>1130.000</PriceLabel>
                <PriceLabel $mb={22}>1005.000</PriceLabel>
                <PriceLabel $mb={19}>885.000</PriceLabel>
                <PriceLabel $mb={17}>785.000</PriceLabel>
                <PriceLabel $mb={0}>705.000</PriceLabel>
              </PriceAxis>
            </ChartRow>
            <TimeRow>
              <TimeAxis>
                {["2010", "2013", "2016", "2019", "2022", "2025", "2028", "2031"].map((t) => <TimeLabel key={t}>{t}</TimeLabel>)}
              </TimeAxis>
              <GearCell><Settings size={16} strokeWidth={1.2} /></GearCell>
            </TimeRow>
            <RangeBar>
              {["1D", "5D", "1M", "3M", "6M", "YTD", "1Y", "5Y", "All"].map((t) => <span key={t}>{t}</span>)}
              <RangeDivider />
              <RangeCal />
              <RangeRight>
                <RangeText $wide>04:11:55 (UTC+1)</RangeText>
                <RangeText $ml={28}>%</RangeText>
                <RangeText $ml={15} $blue>log</RangeText>
                <RangeText $ml={14}>auto</RangeText>
              </RangeRight>
            </RangeBar>
            <TabBar>
              <Tab>Stock Screener</Tab>
              <Tab $ml={10}><ChevronDown size={12} /></Tab>
              <Tab $ml={23}>Pine Editor</Tab>
              <Tab $ml={33}>Strategy Tester</Tab>
              <Tab $ml={33} $active>Trading Panel</Tab>
              <TabTools>
                <Minus size={18} strokeWidth={1.4} style={{ marginTop: 8 }} />
                <Maximize size={18} strokeWidth={1.3} />
              </TabTools>
            </TabBar>
            <PanelFoot><ScrollNub /></PanelFoot>
          </ChartColumn>
          <RightRail>
            <RailButton><ReplayArcs /></RailButton>
            <RailButton $mt={6}><Bell size={24} strokeWidth={1.2} /><BellBadge>12</BellBadge></RailButton>
            <RightSep />
            <RailButton $mt={10}><ZigIcon /></RailButton>
            <RailButton $mt={4}><DotsIcon /></RailButton>
            <RailButton $auto><Layers size={28} strokeWidth={1.1} /></RailButton>
            <RailButton $mt={6}><CircleHelp size={26} strokeWidth={1.1} /></RailButton>
          </RightRail>
        </MainRow>
      </TradingWindow>

      <BackWindow>
        <ArcDrawing width={40} height={90} viewBox="0 0 40 90">
          <path d="M28 0C24 30 14 58 1 82" fill="none" stroke="#8c8f5c" strokeWidth={1} />
        </ArcDrawing>
        <BackFooter>
          <BackRule />
          <BackButtons>
            <BackButton $w={136}>♆ 22°♓44' ℞</BackButton>
            <BackButton $w={140}>♇ 26°♑28'</BackButton>
          </BackButtons>
        </BackFooter>
      </BackWindow>

      <AstroWindow>
        <FormRow>
          <FormLabel $w={61}>Starting</FormLabel>
          <FormField $w={106}>30 Sep 2022</FormField>
          <CalGlyph />
          <FormLabel $w={33}>For</FormLabel>
          <FormField $w={56}>30</FormField>
          <FormSelect>Months<Stepper><ChevronDown size={11} strokeWidth={3} /></Stepper></FormSelect>
          <FormButton $ml={21} $w={68}>Run</FormButton>
          <FormButton $ml={48} $w={30} />
        </FormRow>
        <TabsRow>
          <Segments>
            <Segment $on>Listing</Segment>
            <Segment>Time Graph</Segment>
          </Segments>
          <GhostBtn>E/L</GhostBtn>
          <SideStub>⇕</SideStub>
        </TabsRow>
        <TableHead>
          {HEADS.map(([h, sep, strong]) => (
            <HeadCell key={h} $sep={sep} $strong={strong}>
              {h}
              {strong && <SortCaret><ChevronUp size={12} /></SortCaret>}
            </HeadCell>
          ))}
        </TableHead>
        <TableBody>
          <Rows>
            {ROWS.map((r, i) =>
              r ? (
                <Row key={i}>
                  <span>{r.h1}</span>
                  <G d={r.p1} />
                  <G d={r.asp} />
                  <G d={r.p2} />
                  <span>{r.h2}</span>
                  <span>(X)</span>
                  <Meth>Tr-Ra</Meth>
                  <span>{r.date}</span>
                  <span>{r.time}</span>
                  <span>{r.age}</span>
                  <Hot $hot={r.hot}>{r.pos1}</Hot>
                  <Hot $hot={r.hot}>{r.hot ? "R" : "D"}</Hot>
                  <Hot $hot={r.hot2}>{r.pos2}</Hot>
                </Row>
              ) : (
                <Row key={i} />
              )
            )}
          </Rows>
        </TableBody>
      </AstroWindow>

      <CursorArt width={18} height={26} viewBox="0 0 18 26">
        <path d="M2 1v19l4.500-4 3 7 3.500-1.500-3-7h6z" fill="#111" stroke="#fff" strokeWidth={0.8} />
      </CursorArt>
    </Screen>
  );
}
